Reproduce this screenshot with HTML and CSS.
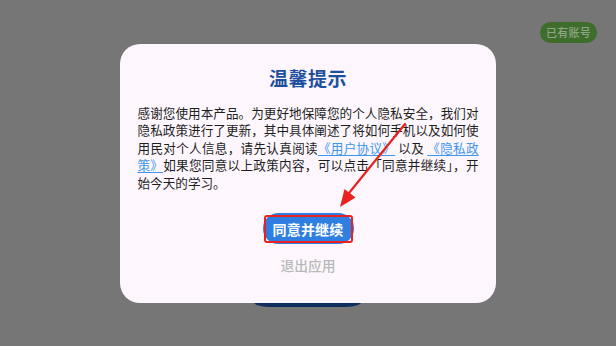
FILE: index.html
```html
<!DOCTYPE html>
<html lang="zh">
<head>
<meta charset="utf-8">
<link rel="stylesheet" href="styles.css">
</head>
<body>
<div class="page">
  <div class="account">已有账号</div>
  <div class="under-btn"></div>
</div>
<div class="overlay">
  <div class="dialog">
    <h1 class="title">温馨提示</h1>
    <p class="body">感谢您使用本产品。为更好地保障您的个人隐私安全，我们对隐私政策进行了更新，其中具体阐述了将如何手机以及如何使用民对个人信息，请先认真阅读<a class="link">《用户协议》</a> 以及 <a class="link">《隐私政策》</a>如果您同意以上政策内容，可以点击「同意并继续」，开始今天的学习。</p>
    <div class="actions">
      <button class="agree">同意并继续</button>
      <span class="highlight"></span>
    </div>
    <div class="quit">退出应用</div>
    <svg class="arrow" width="90" height="100" viewBox="0 0 90 100">
      <path d="M75 5 L19 74" stroke="#e8231f" stroke-width="2.2" fill="none" stroke-linecap="round"/>
      <polygon points="10,88 25.5,78.5 14.5,70" fill="#e8231f"/>
    </svg>
  </div>
</div>
</body>
</html>
```
FILE: styles.css
```css
* { box-sizing: border-box; }
html, body { margin: 0; padding: 0; }
body {
  width: 616px;
  height: 346px;
  background: #767676;
  font-family: "Noto Sans CJK SC", "Noto Sans", sans-serif;
  position: relative;
  overflow: hidden;
}
.page {
  position: absolute;
  inset: 0;
}
.account {
  position: absolute;
  left: 540px;
  top: 22px;
  width: 57px;
  height: 21px;
  border-radius: 11px;
  background: #3e6d2c;
  color: #8fa585;
  font-size: 11px;
  font-weight: 500;
  line-height: 21px;
  text-align: center;
  letter-spacing: 0.3px;
}
.under-btn {
  position: absolute;
  left: 253px;
  top: 262px;
  width: 109px;
  height: 45px;
  border-radius: 0 0 16px 16px / 0 0 6px 6px;
  background: #0f2f5e;
}
.overlay {
  position: absolute;
  inset: 0;
  display: flex;
  align-items: center;
  justify-content: center;
}
.dialog {
  position: relative;
  width: 376px;
  height: 259px;
  background: #fdf7fd;
  border-radius: 20px;
  padding: 21px 18px 0 18px;
  display: flex;
  flex-direction: column;
  align-items: center;
}
.title {
  margin: 0;
  font-size: 19px;
  line-height: 26px;
  font-weight: 700;
  color: #1d4f9e;
  letter-spacing: 0.5px;
}
.body {
  margin: 13px 0 0 0;
  width: 341px;
  font-size: 12.6px;
  line-height: 17.5px;
  color: #1e1e1e;
  text-align: justify;
}
.link {
  color: #3c96ee;
  text-decoration: underline;
  text-underline-offset: 2px;
}
.actions {
  position: relative;
  margin-top: 22px;
  display: flex;
}
.agree {
  width: 91px;
  height: 31px;
  border: none;
  border-radius: 16px;
  background: #2f7fe3;
  color: #ffffff;
  font-family: inherit;
  font-size: 14px;
  font-weight: 700;
  padding: 0;
  letter-spacing: 0.2px;
}
.highlight {
  position: absolute;
  left: 1px;
  top: 2px;
  width: 89px;
  height: 28px;
  border: 2.2px solid #e8231f;
  border-radius: 3px;
}
.quit {
  margin-top: 11px;
  font-size: 13.8px;
  font-weight: 500;
  line-height: 20px;
  color: #b8b8b8;
}
.arrow {
  position: absolute;
  left: 210px;
  top: 75px;
  overflow: visible;
}
```
